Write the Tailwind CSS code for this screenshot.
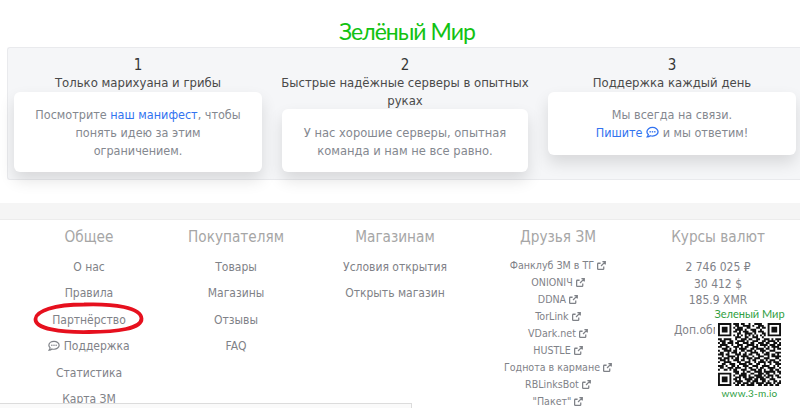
<!doctype html>
<html><head><meta charset="utf-8">
<script src="https://cdn.jsdelivr.net/npm/@tailwindcss/browser@4"></script>
</head>
<body class="bg-white overflow-hidden h-[408px] font-['DejaVu_Sans_Condensed','DejaVu_Sans',sans-serif] [font-stretch:condensed] text-[13px] text-[#4a4a4a]">
<div class="relative flex flex-col h-[408px] overflow-hidden">
<h1 class="h-[47px] shrink-0 pt-[15px] pl-[339px] text-[23px] leading-[32px] tracking-[-1px] text-[#12c212] font-['Lato',sans-serif] [font-stretch:normal]">Зелёный Мир</h1>
<section class="ml-[7px] h-[133px] shrink-0 bg-[#f5f6f8] border-y border-l border-[#e9eaed] rounded-l-[3px] pl-[6px] pr-[3px] flex gap-[20px] text-center">
 <div class="w-[248px]"><div class="text-[15px] font-medium leading-[18px] mt-[8px] text-[#363636]">1</div><div class="leading-[18px]">Только марихуана и грибы</div>
  <div class="bg-white rounded-[6px] shadow-[0_8px_16px_rgba(10,10,10,0.12)] px-[18px] pt-[14px] pb-[12px] leading-[18px] text-[#84888f] text-[12.5px]">Посмотрите <a class="text-[#3273f0]">наш манифест</a>, чтобы понять идею за этим ограничением.</div></div>
 <div class="w-[246px]"><div class="text-[15px] font-medium leading-[18px] mt-[8px] text-[#363636]">2</div><div class="leading-[18px] -mx-[4px]">Быстрые надёжные серверы в опытных руках</div>
  <div class="bg-white rounded-[6px] shadow-[0_8px_16px_rgba(10,10,10,0.12)] -mt-[1px] px-[12px] pt-[15px] pb-[12px] leading-[18px] text-[#84888f] text-[12.8px]">У нас хорошие серверы, опытная команда и нам не все равно.</div></div>
 <div class="w-[248px]"><div class="text-[15px] font-medium leading-[18px] mt-[8px] text-[#363636]">3</div><div class="leading-[18px]">Поддержка каждый день</div>
  <div class="bg-white rounded-[6px] shadow-[0_8px_16px_rgba(10,10,10,0.12)] px-[12px] pt-[14px] pb-[13px] leading-[18px] text-[#84888f] text-[12.5px]">Мы всегда на связи.<br><a class="text-[#3273f0]">Пишите <svg class="inline w-[13px] h-[13px] align-[-2px]" viewBox="0 0 14 14"><path d="M7 1.500C3.700 1.500 1 3.600 1 6.200c0 1.200.6 2.200 1.500 3-.2.9-.8 1.900-1.200 2.500 1.200 0 2.600-.6 3.300-1.200.7.2 1.500.3 2.400.3 3.300 0 6-2.100 6-4.600S10.300 1.500 7 1.500z" fill="none" stroke="currentColor" stroke-width="1.400"/><circle cx="4.500" cy="6.200" r=".9" fill="currentColor"/><circle cx="7" cy="6.200" r=".9" fill="currentColor"/><circle cx="9.500" cy="6.200" r=".9" fill="currentColor"/></svg></a> и мы ответим!</div></div>
</section>
<div class="h-[23px] shrink-0"></div>
<div class="h-[17px] shrink-0 bg-[#f5f5f5] border-b border-[#ececec]"></div>
<footer class="flex-1 flex pl-[16px] text-center text-[#7f8288] text-[12px]">
 <div class="w-[146px] shrink-0"><h3 class="h-[34px] leading-[35px] text-[15.2px] text-[#a6a6a6]">Общее</h3>
  <div class="h-[26.4px] leading-[26.4px]">О нас</div><div class="h-[26.4px] leading-[26.4px]">Правила</div><div class="h-[26.4px] leading-[26.4px]">Партнёрство</div>
  <div class="h-[26.4px] leading-[26.4px]"><svg class="inline w-[12px] h-[12px] align-[-2px]" viewBox="0 0 14 14"><path d="M7 1.500C3.700 1.500 1 3.600 1 6.200c0 1.200.6 2.200 1.500 3-.2.9-.8 1.900-1.200 2.500 1.200 0 2.600-.6 3.300-1.200.7.2 1.500.3 2.400.3 3.300 0 6-2.100 6-4.600S10.300 1.500 7 1.500z" fill="none" stroke="currentColor" stroke-width="1.400"/><circle cx="4.500" cy="6.200" r=".9" fill="currentColor"/><circle cx="7" cy="6.200" r=".9" fill="currentColor"/><circle cx="9.500" cy="6.200" r=".9" fill="currentColor"/></svg> Поддержка</div>
  <div class="h-[26.4px] leading-[26.4px]">Статистика</div><div class="h-[26.4px] leading-[26.4px]">Карта ЗМ</div></div>
 <div class="w-[148px] shrink-0"><h3 class="h-[34px] leading-[35px] text-[15.2px] text-[#a6a6a6]">Покупателям</h3>
  <div class="h-[26.4px] leading-[26.4px]">Товары</div><div class="h-[26.4px] leading-[26.4px]">Магазины</div><div class="h-[26.4px] leading-[26.4px]">Отзывы</div><div class="h-[26.4px] leading-[26.4px]">FAQ</div></div>
 <div class="w-[170px] shrink-0"><h3 class="h-[34px] leading-[35px] text-[15.2px] text-[#a6a6a6]">Магазинам</h3>
  <div class="h-[26.4px] leading-[26.4px]">Условия открытия</div><div class="h-[26.4px] leading-[26.4px]">Открыть магазин</div></div>
 <div class="w-[156px] shrink-0 text-[10.6px]"><h3 class="h-[34px] leading-[35px] text-[15.2px] text-[#a6a6a6] mb-[2.500px]">Друзья ЗМ</h3>
  <div class="h-[17px] leading-[17px]">Фанклуб ЗМ в ТГ <svg class="inline w-[9px] h-[9px] align-[-1px]" viewBox="0 0 10 10"><path d="M7.500 6v2.500a.8.8 0 0 1-.8.8H1.500a.8.8 0 0 1-.8-.8V3.300a.8.8 0 0 1 .8-.8H4M6 .8h3.200V4M9 1 4.500 5.500" fill="none" stroke="currentColor" stroke-width="1.400"/></svg></div>
  <div class="h-[17px] leading-[17px]">ONIONIЧ <svg class="inline w-[9px] h-[9px] align-[-1px]" viewBox="0 0 10 10"><path d="M7.500 6v2.500a.8.8 0 0 1-.8.8H1.500a.8.8 0 0 1-.8-.8V3.300a.8.8 0 0 1 .8-.8H4M6 .8h3.200V4M9 1 4.500 5.500" fill="none" stroke="currentColor" stroke-width="1.400"/></svg></div>
  <div class="h-[17px] leading-[17px]">DDNA <svg class="inline w-[9px] h-[9px] align-[-1px]" viewBox="0 0 10 10"><path d="M7.500 6v2.500a.8.8 0 0 1-.8.8H1.500a.8.8 0 0 1-.8-.8V3.300a.8.8 0 0 1 .8-.8H4M6 .8h3.200V4M9 1 4.500 5.500" fill="none" stroke="currentColor" stroke-width="1.400"/></svg></div>
  <div class="h-[17px] leading-[17px]">TorLink <svg class="inline w-[9px] h-[9px] align-[-1px]" viewBox="0 0 10 10"><path d="M7.500 6v2.500a.8.8 0 0 1-.8.8H1.500a.8.8 0 0 1-.8-.8V3.300a.8.8 0 0 1 .8-.8H4M6 .8h3.200V4M9 1 4.500 5.500" fill="none" stroke="currentColor" stroke-width="1.400"/></svg></div>
  <div class="h-[17px] leading-[17px]">VDark.net <svg class="inline w-[9px] h-[9px] align-[-1px]" viewBox="0 0 10 10"><path d="M7.500 6v2.500a.8.8 0 0 1-.8.8H1.500a.8.8 0 0 1-.8-.8V3.300a.8.8 0 0 1 .8-.8H4M6 .8h3.200V4M9 1 4.500 5.500" fill="none" stroke="currentColor" stroke-width="1.400"/></svg></div>
  <div class="h-[17px] leading-[17px]">HUSTLE <svg class="inline w-[9px] h-[9px] align-[-1px]" viewBox="0 0 10 10"><path d="M7.500 6v2.500a.8.8 0 0 1-.8.8H1.500a.8.8 0 0 1-.8-.8V3.300a.8.8 0 0 1 .8-.8H4M6 .8h3.200V4M9 1 4.500 5.500" fill="none" stroke="currentColor" stroke-width="1.400"/></svg></div>
  <div class="h-[17px] leading-[17px]">Годнота в кармане <svg class="inline w-[9px] h-[9px] align-[-1px]" viewBox="0 0 10 10"><path d="M7.500 6v2.500a.8.8 0 0 1-.8.8H1.500a.8.8 0 0 1-.8-.8V3.300a.8.8 0 0 1 .8-.8H4M6 .8h3.200V4M9 1 4.500 5.500" fill="none" stroke="currentColor" stroke-width="1.400"/></svg></div>
  <div class="h-[17px] leading-[17px]">RBLinksBot <svg class="inline w-[9px] h-[9px] align-[-1px]" viewBox="0 0 10 10"><path d="M7.500 6v2.500a.8.8 0 0 1-.8.8H1.500a.8.8 0 0 1-.8-.8V3.300a.8.8 0 0 1 .8-.8H4M6 .8h3.200V4M9 1 4.500 5.500" fill="none" stroke="currentColor" stroke-width="1.400"/></svg></div>
  <div class="h-[17px] leading-[17px]">"Пакет" <svg class="inline w-[9px] h-[9px] align-[-1px]" viewBox="0 0 10 10"><path d="M7.500 6v2.500a.8.8 0 0 1-.8.8H1.500a.8.8 0 0 1-.8-.8V3.300a.8.8 0 0 1 .8-.8H4M6 .8h3.200V4M9 1 4.500 5.500" fill="none" stroke="currentColor" stroke-width="1.400"/></svg></div></div>
 <div class="w-[164px] shrink-0"><h3 class="h-[34px] leading-[35px] text-[15.2px] text-[#a6a6a6] mb-[5px]">Курсы валют</h3>
  <div class="h-[16.500px] leading-[16.500px]">2 746 025 ₽</div><div class="h-[16.500px] leading-[16.500px]">30 412 $</div><div class="h-[16.500px] leading-[16.500px]">185.9 XMR</div>
  <div class="h-[17px] leading-[17px] mt-[13px]">Доп.обменники</div></div>
</footer>
<!-- red marker ellipse drawn over the screenshot -->
<svg class="absolute left-[30px] top-[298px] w-[120px] h-[40px]" viewBox="0 0 120 40"><path d="M5.500 21C6 13 24 6.500 54 6.500c30-1 57 3 57.500 14 .5 10-24 13.500-52.500 13.500C31 34.500 5 31 5.500 21z" fill="none" stroke="#e6101e" stroke-width="3.800"/></svg>
<!-- QR badge overlay -->
<div class="absolute left-[715px] top-[306px] w-[69px] h-[94px] bg-white flex flex-col items-center font-['DejaVu_Sans',sans-serif]">
 <div class="h-[17px] leading-[15px] text-[#2f9e3f] font-['Lato',sans-serif] [font-stretch:normal] text-[11px] whitespace-nowrap">Зеленый Мир</div>
 <svg class="w-[63px] h-[63px] block shrink-0" viewBox="0 0 33 33"><path fill="#111" d="M0 0h7v7H0zM1 1v5h5V1zM2 2h3v3H2zM26 0h7v7h-7zM27 1v5h5V1zM28 2h3v3h-3zM0 26h7v7H0zM1 27v5h5v-5zM2 28h3v3H2z" fill-rule="evenodd"/><path stroke="#111" stroke-width="1" fill="none" d="M8 .5h3M12 .5h2M16 .5h1M19 .5h4M9 1.500h2M13 1.500h4M18 1.500h1M21 1.500h3M8 2.500h1M10 2.500h3M15 2.500h2M20 2.500h2M23 2.500h2M9 3.500h4M14 3.500h1M17 3.500h3M22 3.500h1M8 4.500h2M11 4.500h1M13 4.500h3M18 4.500h2M21 4.500h3M10 5.500h2M14 5.500h4M19 5.500h1M23 5.500h2M8 6.500h1M10 6.500h1M12 6.500h1M14 6.500h1M16 6.500h1M18 6.500h1M20 6.500h1M22 6.500h1M24 6.500h1M9 7.500h3M14 7.500h2M18 7.500h3M23 7.500h1M0 8.500h2M3 8.500h4M9 8.500h1M12 8.500h3M16 8.500h2M20 8.500h2M24 8.500h3M28 8.500h1M30 8.500h3M1 9.500h3M6 9.500h2M10 9.500h4M15 9.500h1M18 9.500h3M23 9.500h2M26 9.500h4M31 9.500h1M0 10.500h1M2 10.500h2M5 10.500h3M9 10.500h2M13 10.500h3M17 10.500h2M21 10.500h3M25 10.500h2M29 10.500h2M32 10.500h1M1 11.500h4M7 11.500h1M10 11.500h3M15 11.500h4M20 11.500h1M22 11.500h4M27 11.500h3M31 11.500h2M0 12.500h2M4 12.500h2M8 12.500h3M12 12.500h1M14 12.500h2M18 12.500h3M24 12.500h1M26 12.500h1M28 12.500h4M2 13.500h3M6 13.500h1M9 13.500h1M11 13.500h4M17 13.500h2M20 13.500h4M25 13.500h2M29 13.500h1M31 13.500h2M0 14.500h1M3 14.500h4M8 14.500h2M12 14.500h2M15 14.500h3M19 14.500h1M22 14.500h3M27 14.500h3M1 15.500h2M5 15.500h1M7 15.500h3M11 15.500h1M14 15.500h1M17 15.500h4M23 15.500h1M25 15.500h2M30 15.500h3M0 16.500h3M4 16.500h2M9 16.500h3M13 16.500h2M16 16.500h2M20 16.500h2M24 16.500h3M28 16.500h2M31 16.500h1M2 17.500h1M5 17.500h4M10 17.500h1M12 17.500h4M18 17.500h1M21 17.500h3M26 17.500h1M28 17.500h5M0 18.500h2M3 18.500h3M7 18.500h1M9 18.500h2M13 18.500h1M15 18.500h3M19 18.500h3M24 18.500h3M30 18.500h2M1 19.500h3M5 19.500h1M8 19.500h3M12 19.500h2M16 19.500h1M18 19.500h2M22 19.500h2M25 19.500h1M27 19.500h3M32 19.500h1M0 20.500h1M3 20.500h4M10 20.500h2M14 20.500h3M19 20.500h1M21 20.500h4M26 20.500h2M29 20.500h3M2 21.500h2M6 21.500h3M11 21.500h4M16 21.500h2M20 21.500h2M24 21.500h1M27 21.500h1M30 21.500h3M0 22.500h3M4 22.500h1M7 22.500h2M10 22.500h1M13 22.500h3M18 22.500h3M23 22.500h4M29 22.500h1M31 22.500h1M1 23.500h2M5 23.500h3M9 23.500h3M14 23.500h1M16 23.500h2M20 23.500h1M22 23.500h2M26 23.500h4M32 23.500h1M0 24.500h1M3 24.500h2M6 24.500h1M8 24.500h2M12 24.500h3M17 24.500h3M21 24.500h2M24 24.500h1M27 24.500h2M30 24.500h2M8 25.500h3M13 25.500h1M15 25.500h2M19 25.500h4M24 25.500h6M31 25.500h2M9 26.500h2M12 26.500h3M17 26.500h2M21 26.500h3M25 26.500h2M29 26.500h1M32 26.500h1M8 27.500h1M11 27.500h4M16 27.500h1M19 27.500h4M24 27.500h1M26 27.500h3M30 27.500h2M9 28.500h3M13 28.500h2M16 28.500h3M20 28.500h4M25 28.500h2M28 28.500h1M31 28.500h2M8 29.500h2M11 29.500h1M14 29.500h4M19 29.500h2M22 29.500h3M27 29.500h3M9 30.500h4M15 30.500h2M18 30.500h3M23 30.500h2M26 30.500h1M29 30.500h2M32 30.500h1M8 31.500h1M10 31.500h2M13 31.500h3M17 31.500h2M20 31.500h4M25 31.500h3M29 31.500h1M31 31.500h2M9 32.500h2M12 32.500h2M15 32.500h4M21 32.500h2M24 32.500h2M27 32.500h2M30 32.500h2"/></svg>
 <div class="h-[14px] leading-[14px] mt-[0px] text-[#2f9e3f] font-['Lato',sans-serif] [font-stretch:normal] text-[10px] tracking-[0.2px] whitespace-nowrap">www.3-m.io</div>
</div>
<!-- partially visible bar at the bottom edge -->
<div class="absolute left-0 top-[403px] w-[412px] h-[5px] bg-[#fafafa] border-t border-r border-[#dcdcdc]"></div>
</div>
</body></html>
